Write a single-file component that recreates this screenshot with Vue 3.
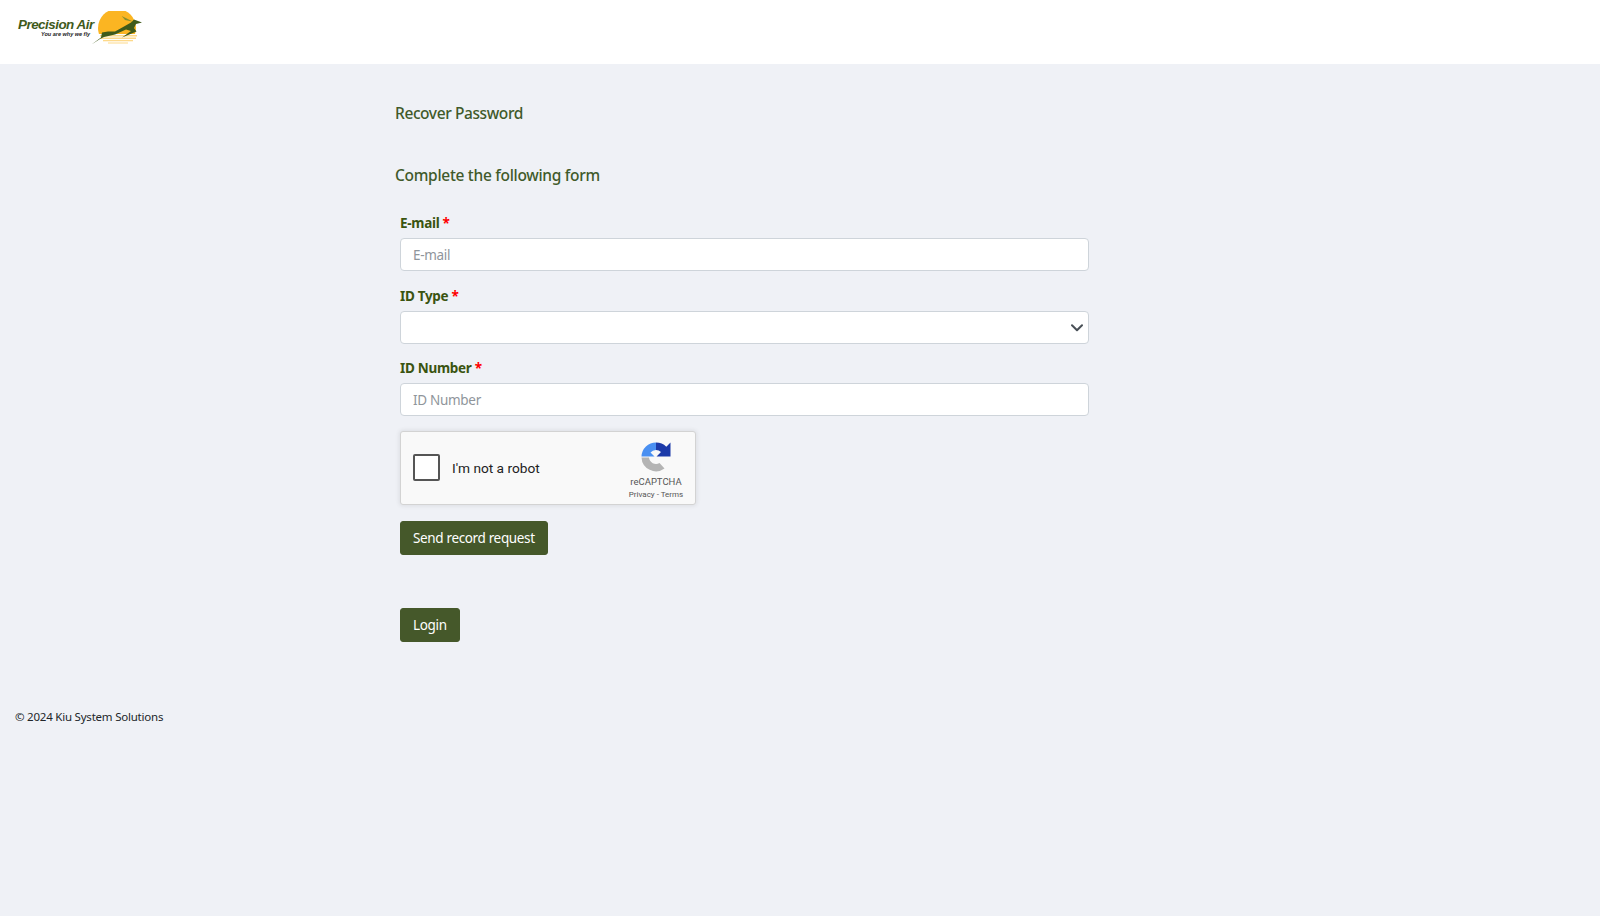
<script setup>
import { ref } from 'vue';

const email = ref('');
const idType = ref('');
const idNumber = ref('');
</script>

<template>
    <div class="page">
        <header class="topbar">
            <!-- Logo -->
            <svg class="logo" width="130" height="40" viewBox="0 0 130 40">
                <clipPath id="sun-clip"><rect x="70" y="-5" width="60" height="28" /></clipPath>
                <circle cx="101" cy="17" r="19" fill="#fbb522" clip-path="url(#sun-clip)" />
                <g fill="#fdd98a">
                    <rect x="84" y="24" width="37" height="1.5" />
                    <rect x="85" y="26.5" width="35" height="1.5" />
                    <rect x="87" y="29" width="30" height="1.3" />
                    <rect x="92" y="31.5" width="20" height="1" />
                </g>
                <path d="M75.5 33.5 L85 26.5 L86 21.5 L92 20.5 L99 20.5 L108 15.5 L115 11.5 L118 8.5 L126 11.5 L120 13 L118 17 L120.5 20.5 L106 26.5 L115 20 L110 18.5 L99 23.5 L88 26 L84 28 Z" fill="#3f5a1b" />
                <path d="M105.7 5 L117.3 10.7 L109 9 Z" fill="#8a8f2e" />
                <text x="2" y="18" class="logo-name">Precision Air</text>
                <text x="25" y="25" class="logo-tag">You are why we fly</text>
            </svg>
        </header>

        <main class="content">
            <h1 class="title">Recover Password</h1>
            <h2 class="subtitle">Complete the following form</h2>

            <form class="form" @submit.prevent>
                <div class="field">
                    <label>E-mail <span class="req">*</span></label>
                    <input type="text" v-model="email" placeholder="E-mail" />
                </div>
                <div class="field">
                    <label>ID Type <span class="req">*</span></label>
                    <div class="select-wrap">
                        <select v-model="idType">
                            <option value=""></option>
                        </select>
                        <svg class="chevron" width="12" height="8" viewBox="0 0 12 8">
                            <path d="M1 1.2 L6 6.2 L11 1.2" fill="none" stroke="#495057" stroke-width="2" stroke-linecap="round" stroke-linejoin="round" />
                        </svg>
                    </div>
                </div>
                <div class="field">
                    <label>ID Number <span class="req">*</span></label>
                    <input type="text" v-model="idNumber" placeholder="ID Number" />
                </div>

                <!-- reCAPTCHA box -->
                <div class="captcha">
                    <span class="captcha-check"></span>
                    <span class="captcha-text">I'm not a robot</span>
                    <div class="captcha-brand">
                        <svg width="30" height="30" viewBox="0 0 30 30">
                            <path d="M15 0.5 V8 A7 7 0 0 0 9.5 10.5 L13.5 14.5 H0.5 A14.5 14.5 0 0 1 15 0.5 Z" fill="#4a90f2" />
                            <path d="M15 0.5 A14.5 14.5 0 0 1 25.3 4.7 L29.5 0.5 V14.5 H15.5 L20 10 A7 7 0 0 0 15 8 Z" fill="#1c3aa9" />
                            <path d="M0.5 15.5 H8 A7 7 0 0 0 18.5 21 L23.5 26.5 A14.5 14.5 0 0 1 0.5 15.5 Z" fill="#b4b4b4" />
                        </svg>
                        <span class="captcha-name">reCAPTCHA</span>
                        <span class="captcha-links">Privacy - Terms</span>
                    </div>
                </div>

                <button class="btn send" type="button">Send record request</button>
                <button class="btn login" type="button">Login</button>
            </form>
        </main>

        <footer class="footer">© 2024 Kiu System Solutions</footer>
    </div>
</template>

<style>
html,
body {
    margin: 0;
    background: #eff1f6;
}
</style>

<style scoped>
.page {
    min-height: 916px;
    background: #eff1f6;
    font-family: "Noto Sans", "Open Sans", sans-serif;
    color: #212529;
}

.topbar {
    height: 64px;
    background: #fff;
    padding: 11px 0 0 16px;
    box-sizing: border-box;
}

.logo {
    display: block;
}

.logo-name {
    font-family: "Liberation Sans", sans-serif;
    font-size: 13.4px;
    font-weight: 700;
    font-style: italic;
    letter-spacing: -0.5px;
    fill: #3f5a1b;
}

.logo-tag {
    font-family: "Liberation Sans", sans-serif;
    font-size: 5.5px;
    font-style: italic;
    font-weight: 700;
    fill: #222;
}

.content {
    width: 700px;
    margin-left: 395px;
}

.title {
    margin: 0;
    padding-top: 37px;
    font-size: 15.5px;
    line-height: 24px;
    font-weight: 500;
    letter-spacing: -0.4px;
    color: #3f5a2a;
}

.subtitle {
    margin: 0;
    padding-top: 38px;
    font-size: 15.5px;
    line-height: 24px;
    font-weight: 500;
    letter-spacing: -0.3px;
    color: #3f5a2a;
}

.form {
    margin: 26px 0 0 5px;
    width: 689px;
}

.field {
    margin-bottom: 14.5px;
}

label {
    display: block;
    height: 20px;
    line-height: 20px;
    margin-bottom: 5px;
    font-size: 13.5px;
    font-weight: 700;
    letter-spacing: -0.3px;
    color: #3a5410;
}

.req {
    color: #f00;
}

input,
select {
    display: block;
    width: 100%;
    height: 33px;
    box-sizing: border-box;
    padding: 0 12px;
    font-family: inherit;
    font-size: 13.5px;
    letter-spacing: -0.3px;
    color: #212529;
    background: #fff;
    border: 1px solid #ced4da;
    border-radius: 4px;
    outline: none;
    appearance: none;
}

input::placeholder {
    color: #8f959b;
    opacity: 1;
}

.select-wrap {
    position: relative;
}

.chevron {
    position: absolute;
    right: 6px;
    top: 13px;
}

.captcha {
    display: flex;
    align-items: center;
    width: 296px;
    height: 74px;
    box-sizing: border-box;
    margin-top: 14.5px;
    background: #f9f9f9;
    border: 1px solid #d3d3d3;
    border-radius: 3px;
    box-shadow: 0 0 4px 1px rgba(0, 0, 0, 0.08);
    font-family: Roboto, sans-serif;
}

.captcha-check {
    width: 27px;
    height: 27px;
    box-sizing: border-box;
    margin-left: 12px;
    background: #fff;
    border: 2px solid #555;
    border-radius: 2px;
}

.captcha-text {
    margin-left: 12px;
    font-size: 13.7px;
    color: #222;
}

.captcha-brand {
    display: flex;
    flex-direction: column;
    align-items: center;
    margin-left: auto;
    width: 60px;
    margin-right: 9px;
    padding-top: 6px;
    color: #555;
}

.captcha-name {
    margin-top: 4px;
    font-size: 9.5px;
    line-height: 12px;
}

.captcha-links {
    margin-top: 2px;
    font-size: 8px;
    line-height: 10px;
    white-space: nowrap;
}

.btn {
    display: block;
    height: 34px;
    padding: 0 12px;
    font-family: inherit;
    font-size: 13.5px;
    letter-spacing: -0.35px;
    color: #fff;
    background: #45582a;
    border: 1px solid #45582a;
    border-radius: 3px;
    cursor: pointer;
}

.send {
    margin-top: 16px;
}

.login {
    margin-top: 53px;
}

.footer {
    margin-top: 65.5px;
    padding-left: 15px;
    font-size: 11.5px;
    line-height: 20px;
    letter-spacing: -0.22px;
    color: #212529;
}
</style>
